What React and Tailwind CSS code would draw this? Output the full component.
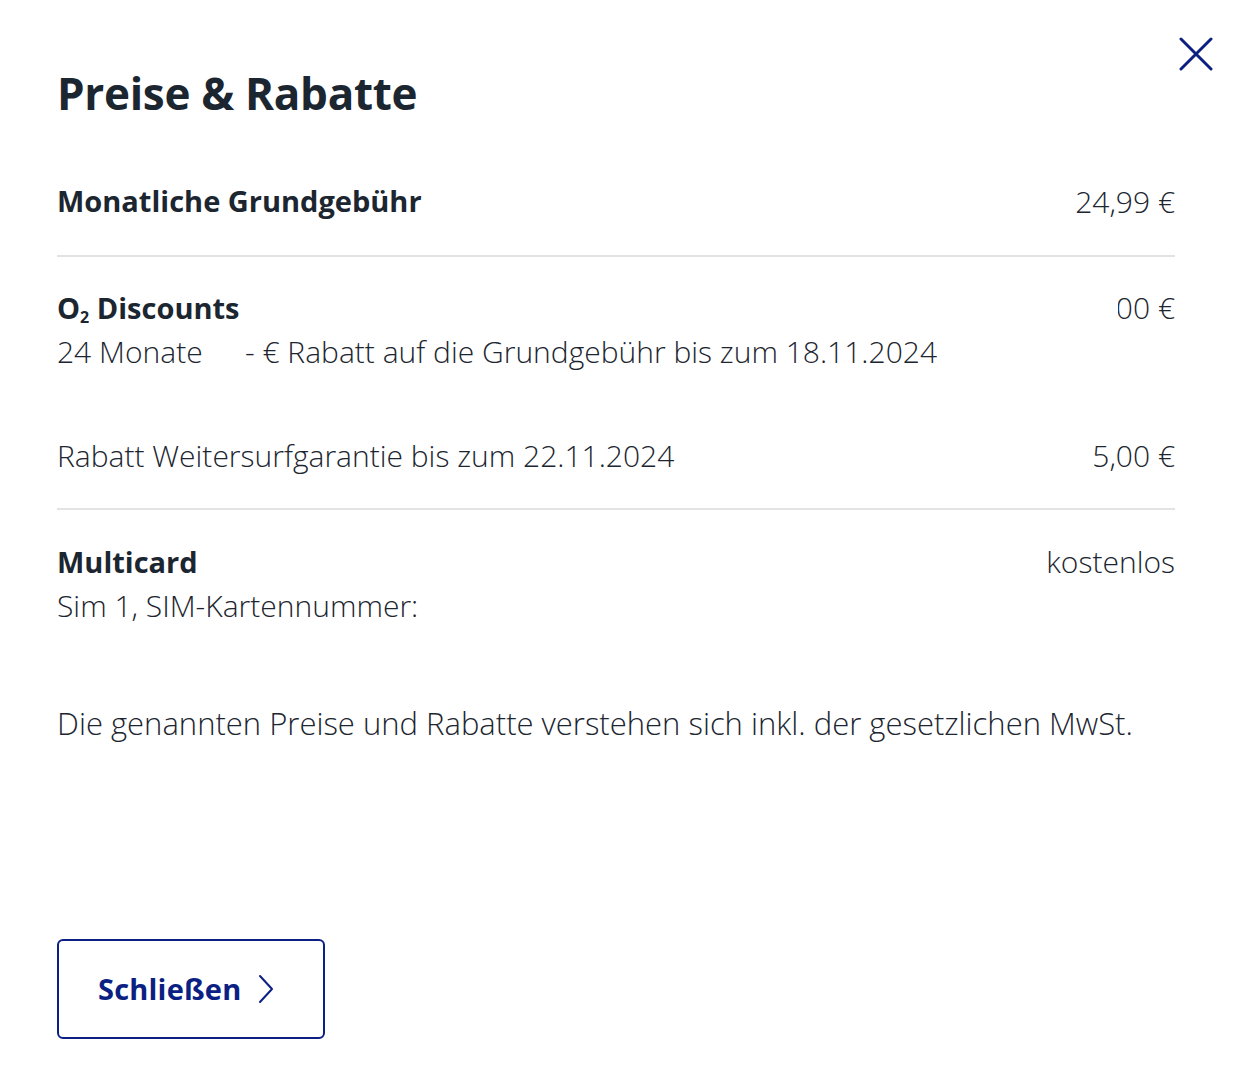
import React from "react";

export default function App() {
  return (
    <div className="min-h-[1092px] w-full bg-white text-[#1c2630] font-['Open_Sans',sans-serif] relative">
      <button className="absolute right-[30px] top-[37px] w-[34px] h-[34px] text-[#0c1f83]" aria-label="Schließen">
        <svg viewBox="0 0 34 34" className="w-full h-full" fill="none" stroke="currentColor" strokeWidth="3" strokeLinecap="round">
          <path d="M2 2 L32 32 M32 2 L2 32" />
        </svg>
      </button>
      <div className="pl-[57px] pr-[68px] pt-[64px]">
        <h1 className="text-[44px] leading-[58px] font-bold tracking-[-0.3px]">Preise &amp; Rabatte</h1>

        <div className="mt-[59px] flex justify-between items-center h-[40px]">
          <span className="text-[29px] font-bold">Monatliche Grundgebühr</span>
          <span className="text-[30px] font-light">24,99 €</span>
        </div>
        <div className="mt-[34px] h-[2px] bg-[#e2e3e5]" />

        <div className="mt-[31px] flex justify-between">
          <div>
            <div className="text-[29px] font-bold leading-[40px]">
              O<sub className="text-[16px] font-bold">2</sub> Discounts
            </div>
            <div className="text-[30px] font-light leading-[40px] mt-[4px] flex">
              <span className="w-[188px]">24 Monate</span>
              <span>- € Rabatt auf die Grundgebühr bis zum 18.11.2024</span>
            </div>
          </div>
          <div className="w-[57px] overflow-hidden flex justify-end whitespace-nowrap text-[30px] font-light leading-[40px]">
            <span>0,00 €</span>
          </div>
        </div>

        <div className="mt-[63px] flex justify-between items-center h-[40px]">
          <span className="text-[30px] font-light">Rabatt Weitersurfgarantie bis zum 22.11.2024</span>
          <span className="text-[30px] font-light">5,00 €</span>
        </div>
        <div className="mt-[33px] h-[2px] bg-[#e2e3e5]" />

        <div className="mt-[32px] flex justify-between">
          <div>
            <div className="text-[29px] font-bold leading-[40px]">Multicard</div>
            <div className="text-[30px] font-light leading-[40px] mt-[4px]">Sim 1, SIM-Kartennummer:</div>
          </div>
          <span className="text-[30px] font-light leading-[40px]">kostenlos</span>
        </div>

        <p className="mt-[77px] text-[31px] font-light leading-[40px]">
          Die genannten Preise und Rabatte verstehen sich inkl. der gesetzlichen MwSt.
        </p>

        <button className="mt-[196px] w-[268px] h-[100px] border-2 border-[#0c1f83] rounded-[6px] flex items-center justify-start pl-[39px] gap-[17px] text-[#0c1f83]">
          <span className="text-[29px] font-bold tracking-[0.2px]">Schließen</span>
          <svg viewBox="0 0 16 30" className="w-[16px] h-[30px]" fill="none" stroke="currentColor" strokeWidth="2" strokeLinecap="round" strokeLinejoin="round">
            <path d="M2 2 L14 15 L2 28" />
          </svg>
        </button>
      </div>
    </div>
  );
}
